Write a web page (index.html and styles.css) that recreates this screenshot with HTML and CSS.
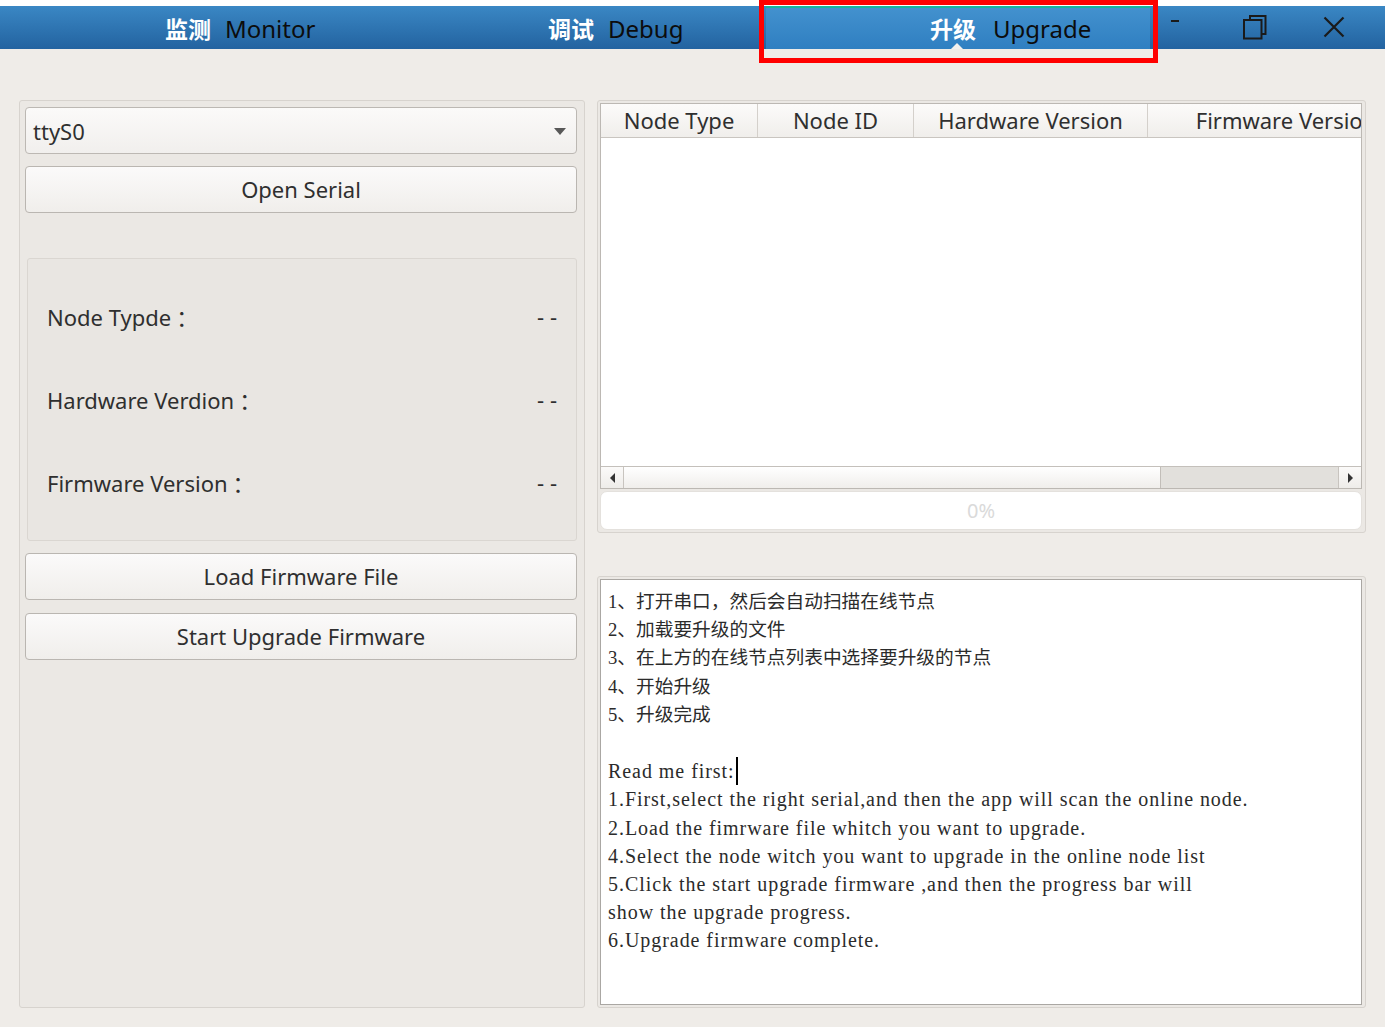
FILE: index.html
```html
<!DOCTYPE html>
<html lang="zh">
<head>
<meta charset="utf-8">
<title>Upgrade</title>
<link rel="stylesheet" href="styles.css">
</head>
<body>
<div class="topstrip"></div>
<header class="tabbar">
  <div class="tab"><span class="tab-cn">监测</span><span class="tab-en">Monitor</span></div>
  <div class="tab"><span class="tab-cn">调试</span><span class="tab-en">Debug</span></div>
  <div class="tab active"><span class="tab-cn">升级</span><span class="tab-en gap">Upgrade</span><span class="tab-tri"></span></div>
  <div class="controls">
    <div class="ctl ctl-min"><span class="dash"></span></div>
    <div class="ctl ctl-max">
      <svg width="26" height="26" viewBox="0 0 26 26"><path d="M8 5.5V2h15.5v18H20" fill="none" stroke="#1a1a1a" stroke-width="2"/><rect x="2" y="6" width="17.5" height="18.5" fill="none" stroke="#1a1a1a" stroke-width="2"/></svg>
    </div>
    <div class="ctl ctl-close">
      <svg width="22" height="22" viewBox="0 0 22 22"><path d="M1.5 1.5L20.5 20.5M20.5 1.5L1.5 20.5" stroke="#1a1a1a" stroke-width="2.2"/></svg>
    </div>
  </div>
</header>
<div class="annot"></div>

<main class="main">
  <section class="panel left">
    <div class="combo"><span>ttyS0</span><span class="arrow"></span></div>
    <button class="btn first">Open Serial</button>
    <div class="info">
      <div class="info-row"><span>Node Typde<span class="colon">：</span></span><span>- -</span></div>
      <div class="info-row"><span>Hardware Verdion<span class="colon">：</span></span><span>- -</span></div>
      <div class="info-row"><span>Firmware Version<span class="colon">：</span></span><span>- -</span></div>
    </div>
    <button class="btn load">Load Firmware File</button>
    <button class="btn start">Start Upgrade Firmware</button>
  </section>

  <div class="right">
    <section class="panel frame-top">
      <div class="table">
        <div class="thead">
          <div class="th c1">Node Type</div>
          <div class="th c2">Node ID</div>
          <div class="th c3">Hardware Version</div>
          <div class="th c4">Firmware Version</div>
        </div>
        <div class="tbody"></div>
        <div class="hscroll">
          <div class="sb-btn"><span class="tri-l"></span></div>
          <div class="sb-handle"></div>
          <div class="sb-track"></div>
          <div class="sb-btn"><span class="tri-r"></span></div>
        </div>
      </div>
      <div class="progress">0%</div>
    </section>

    <section class="panel frame-bottom">
      <div class="textedit">
        <p class="cn">1、打开串口，然后会自动扫描在线节点</p>
        <p class="cn">2、加载要升级的文件</p>
        <p class="cn">3、在上方的在线节点列表中选择要升级的节点</p>
        <p class="cn">4、开始升级</p>
        <p class="cn">5、升级完成</p>
        <p>&nbsp;</p>
        <p>Read me first:<span class="caret"></span></p>
        <p>1.First,select the right serial,and then the app will scan the online node.</p>
        <p>2.Load the fimrware file whitch you want to upgrade.</p>
        <p>4.Select the node witch you want to upgrade in the online node list</p>
        <p>5.Click the start upgrade firmware ,and then the progress bar will</p>
        <p>show the upgrade progress.</p>
        <p>6.Upgrade firmware complete.</p>
      </div>
    </section>
  </div>
</main>
</body>
</html>
```
FILE: styles.css
```css
html, body {
  margin: 0;
  padding: 0;
}
body {
  width: 1385px;
  height: 1027px;
  overflow: hidden;
  position: relative;
  background: #efece8;
  font-family: "Noto Sans", "Noto Sans CJK SC", sans-serif;
  color: #3b3b3b;
}

.topstrip {
  height: 6px;
  background: #ffffff;
}

.tabbar {
  display: flex;
  height: 43px;
  background: linear-gradient(#3a87c4, #2363a0);
}

.tab {
  width: 383px;
  box-sizing: border-box;
  padding-left: 165px;
  padding-top: 2px;
  display: flex;
  align-items: center;
  position: relative;
}
.tab.active {
  width: 384px;
  padding-left: 164px;
  padding-top: 0;
  background: linear-gradient(#4391ce, #2f7fc1);
  border-top: 2px solid #17b39b;
}
.tab-cn {
  font-family: "Noto Sans CJK SC", sans-serif;
  font-weight: 700;
  font-size: 23px;
  color: #ffffff;
  line-height: 1;
}
.tab-en {
  font-family: "Noto Sans", sans-serif;
  font-size: 24px;
  color: #0c0c0c;
  margin-left: 14px;
  line-height: 1;
}
.tab-en.gap {
  margin-left: 17px;
}
.tab-tri {
  position: absolute;
  left: 185px;
  bottom: 0;
  width: 0;
  height: 0;
  border-left: 6px solid transparent;
  border-right: 6px solid transparent;
  border-bottom: 6px solid #f3f1ee;
}

.controls {
  flex: 1;
  display: flex;
}
.ctl {
  display: flex;
  align-items: center;
  justify-content: center;
}
.ctl-min {
  width: 50px;
  align-items: flex-start;
  padding-top: 14px;
  box-sizing: border-box;
}
.dash {
  display: block;
  width: 8px;
  height: 2px;
  background: #1a1a1a;
}
.ctl-max {
  width: 110px;
  padding-bottom: 2px;
  box-sizing: border-box;
}
.ctl-close {
  width: 48px;
  padding-bottom: 2px;
  box-sizing: border-box;
}

.annot {
  position: absolute;
  left: 759px;
  top: 0;
  width: 399px;
  height: 63px;
  box-sizing: border-box;
  border: 5px solid #ff0000;
  pointer-events: none;
}

.main {
  display: flex;
  gap: 12px;
  padding: 51px 0 0 19px;
}

.panel {
  box-sizing: border-box;
  border: 1px solid #d7d3ce;
  border-radius: 3px;
  background: #ebe8e4;
}

.left {
  width: 566px;
  height: 908px;
  padding: 6px 7px 0 5px;
  display: flex;
  flex-direction: column;
}

.combo {
  height: 47px;
  box-sizing: border-box;
  border: 1px solid #bcb8b3;
  border-radius: 4px;
  background: linear-gradient(#fbfaf9, #f1efed);
  display: flex;
  align-items: center;
  justify-content: space-between;
  padding: 0 10px 0 7px;
  font-size: 22px;
  color: #2f2f2f;
}
.arrow {
  width: 0;
  height: 0;
  border-left: 6px solid transparent;
  border-right: 6px solid transparent;
  border-top: 7px solid #585858;
  margin-top: 2px;
}

.btn {
  display: block;
  width: 100%;
  height: 47px;
  box-sizing: border-box;
  border: 1px solid #bab6b1;
  border-radius: 4px;
  background: linear-gradient(#fbfafa, #f0eeeb);
  font-family: "Noto Sans", sans-serif;
  font-size: 22px;
  color: #2f2f2f;
  padding: 0;
  padding-bottom: 2px;
}
.btn.first { margin-top: 12px; }
.btn.load { margin-top: 12px; }
.btn.start { margin-top: 13px; }

.info {
  margin-top: 45px;
  margin-left: 2px;
  height: 283px;
  box-sizing: border-box;
  border: 1px solid #dad6d1;
  border-radius: 3px;
  background: #e9e6e2;
  padding: 15px 19px 17px 19px;
  display: flex;
  flex-direction: column;
}
.info-row {
  height: 83.5px;
  display: flex;
  align-items: center;
  justify-content: space-between;
  font-size: 22px;
  color: #2f2f2f;
}
.colon {
  margin-left: 5px;
}

.right {
  width: 769px;
  display: flex;
  flex-direction: column;
  gap: 43px;
}

.frame-top {
  height: 433px;
  padding: 2px 3px 2px 2px;
  display: flex;
  flex-direction: column;
  gap: 2px;
}

.table {
  height: 386px;
  box-sizing: border-box;
  border: 1px solid #bcb8b3;
  background: #ffffff;
  display: flex;
  flex-direction: column;
  overflow: hidden;
}
.thead {
  height: 34px;
  flex: none;
  box-sizing: border-box;
  display: flex;
  border-bottom: 1px solid #c9c5c0;
  background: linear-gradient(#fcfbfa, #f0eeeb);
  overflow: hidden;
}
.th {
  flex: none;
  box-sizing: border-box;
  border-right: 1px solid #d4d0cb;
  display: flex;
  align-items: center;
  justify-content: center;
  font-size: 22px;
  color: #2f2f2f;
  white-space: nowrap;
  padding-bottom: 1px;
}
.c1 { width: 157px; }
.c2 { width: 156px; }
.c3 { width: 234px; }
.c4 { width: 276px; border-right: none; }

.tbody {
  flex: 1;
}

.hscroll {
  height: 22px;
  flex: none;
  display: flex;
  box-sizing: border-box;
  border-top: 1px solid #c4c0bb;
}
.sb-btn {
  width: 22px;
  flex: none;
  display: flex;
  align-items: center;
  justify-content: center;
  background: linear-gradient(#fbfaf9, #eeece9);
}
.sb-btn:first-child { border-right: 1px solid #c8c4bf; }
.sb-btn:last-child { border-left: 1px solid #c8c4bf; }
.tri-l {
  width: 0; height: 0;
  border-top: 5px solid transparent;
  border-bottom: 5px solid transparent;
  border-right: 5px solid #333;
}
.tri-r {
  width: 0; height: 0;
  border-top: 5px solid transparent;
  border-bottom: 5px solid transparent;
  border-left: 5px solid #333;
}
.sb-handle {
  width: 537px;
  flex: none;
  box-sizing: border-box;
  border-right: 1px solid #c2beb9;
  background: linear-gradient(#ffffff, #f0eeeb);
}
.sb-track {
  flex: 1;
  background: #e2e0dc;
}

.progress {
  height: 39px;
  box-sizing: border-box;
  border: 1px solid #e4e1dd;
  border-radius: 7px;
  background: #ffffff;
  display: flex;
  align-items: center;
  justify-content: center;
  font-size: 20px;
  color: #dadada;
}

.frame-bottom {
  height: 432px;
  padding: 2px 3px 2px 2px;
}
.textedit {
  height: 100%;
  box-sizing: border-box;
  border: 1px solid #aaa7a3;
  background: #ffffff;
  padding: 8px 7px;
  font-family: "Liberation Serif", "Noto Sans CJK SC", serif;
  font-size: 20px;
  letter-spacing: 0.95px;
  line-height: 28.2px;
  color: #2b2b2b;
}
.textedit p {
  margin: 0;
  white-space: nowrap;
}
.textedit p.cn {
  font-size: 18.7px;
  letter-spacing: 0;
}
.caret {
  display: inline-block;
  width: 0;
  height: 28px;
  border-left: 2px solid #000;
  vertical-align: -7px;
  margin-left: 1px;
}
```
